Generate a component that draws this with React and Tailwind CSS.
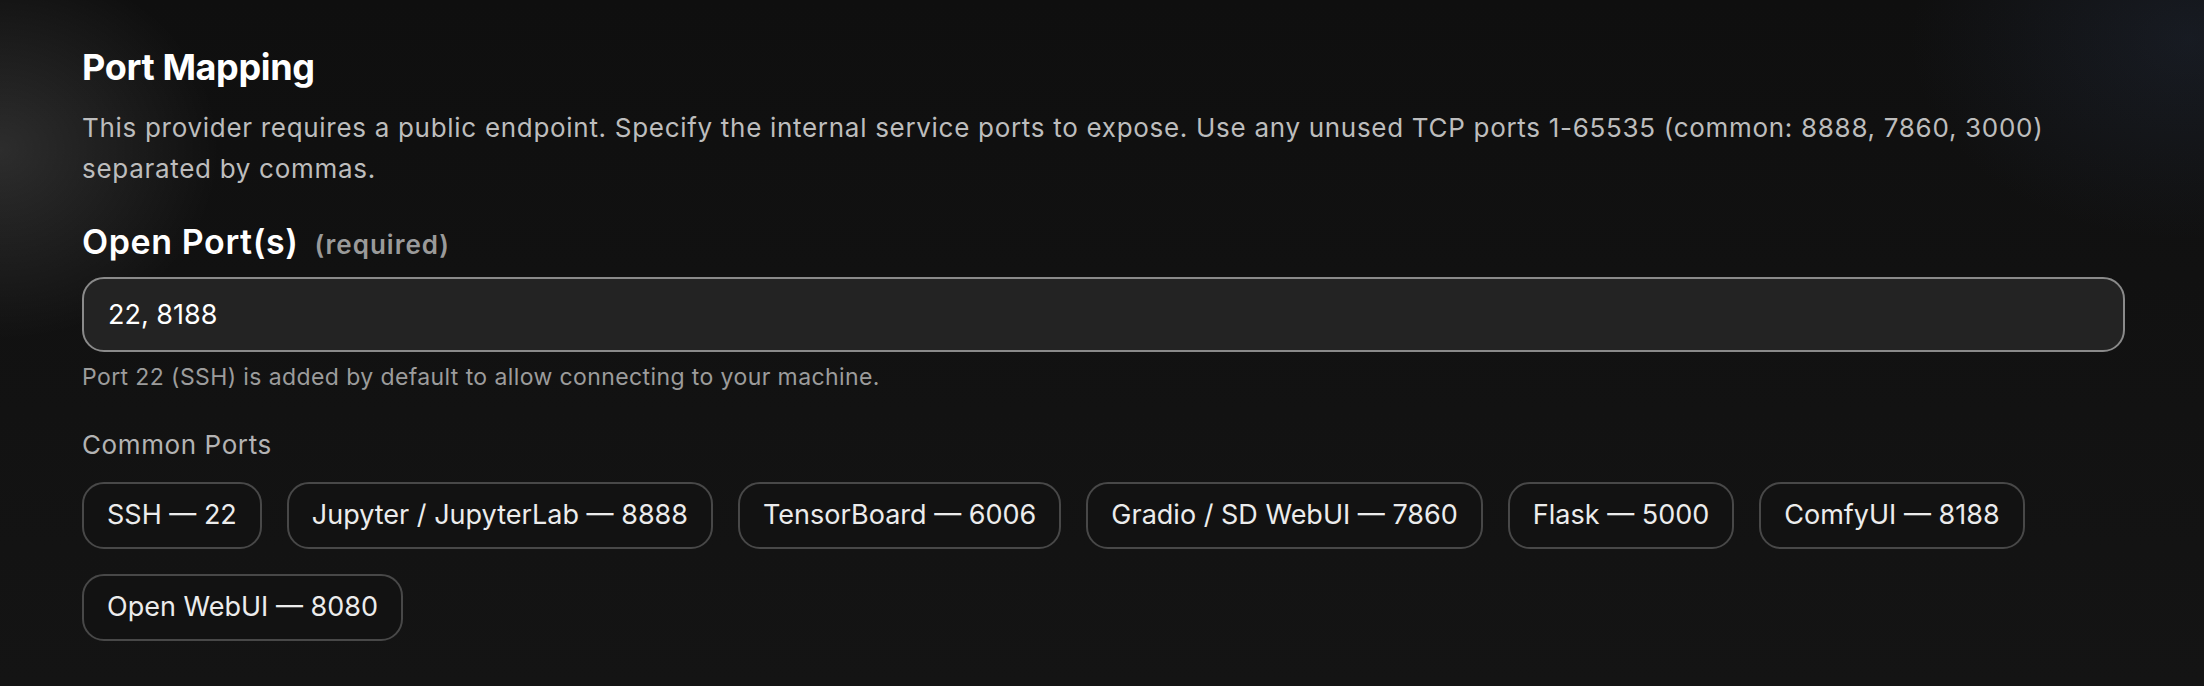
import React, { useState } from "react";

const commonPorts = [
  { label: "SSH", port: 22 },
  { label: "Jupyter / JupyterLab", port: 8888 },
  { label: "TensorBoard", port: 6006 },
  { label: "Gradio / SD WebUI", port: 7860 },
  { label: "Flask", port: 5000 },
  { label: "ComfyUI", port: 8188 },
  { label: "Open WebUI", port: 8080 },
];

export default function App() {
  const [ports, setPorts] = useState("22, 8188");

  const addPort = (port) => {
    const list = ports.split(",").map((p) => p.trim()).filter(Boolean);
    if (!list.includes(String(port))) {
      setPorts([...list, port].join(", "));
    }
  };

  return (
    <div
      className="min-h-screen w-full bg-[#111111] bg-[radial-gradient(ellipse_220px_190px_at_0px_150px,rgba(255,255,255,0.12),transparent),radial-gradient(ellipse_280px_200px_at_2190px_40px,rgba(60,80,120,0.18),transparent),linear-gradient(180deg,#0f0f0f,#141414)] pt-[45px] pl-[82px] pr-[79px] font-['Inter',sans-serif]"
    >
      <h2 className="text-[36px] leading-[44px] font-bold text-white tracking-[-0.01em]">
        Port Mapping
      </h2>
      <p className="mt-[18px] text-[26px] leading-[41px] tracking-[0.7px] text-[#bdbdbd]">
        This provider requires a public endpoint. Specify the internal service ports to expose. Use any unused TCP ports 1-65535 (common: 8888, 7860, 3000) separated by commas.
      </p>

      <div className="mt-[33px] flex items-baseline gap-[16px]">
        <label className="text-[34px] leading-[40px] font-semibold text-white tracking-[0.6px]">
          Open Port(s)
        </label>
        <span className="text-[26px] font-semibold tracking-[1px] text-[#9a9a9a]">(required)</span>
      </div>

      <input
        type="text"
        value={ports}
        onChange={(e) => setPorts(e.target.value)}
        className="mt-[13px] block w-full h-[75px] rounded-[22px] border-2 border-[#8a8a8a] bg-[#232323] px-[24px] text-[27px] text-white outline-none"
      />
      <p className="mt-[10px] text-[23px] leading-[30px] tracking-[0.4px] text-[#9c9c9c]">
        Port 22 (SSH) is added by default to allow connecting to your machine.
      </p>

      <div className="mt-[37px] text-[26px] leading-[32px] tracking-[0.6px] text-[#b3b3b3]">Common Ports</div>

      <div className="mt-[21px] flex flex-wrap gap-[25px]">
        {commonPorts.map((item) => (
          <button
            key={item.port}
            onClick={() => addPort(item.port)}
            className="h-[67px] flex items-center rounded-[22px] border-2 border-[#484848] bg-[#121212] px-[23px] text-[27px] text-[#ececec]"
          >
            {item.label} — {item.port}
          </button>
        ))}
      </div>
    </div>
  );
}
